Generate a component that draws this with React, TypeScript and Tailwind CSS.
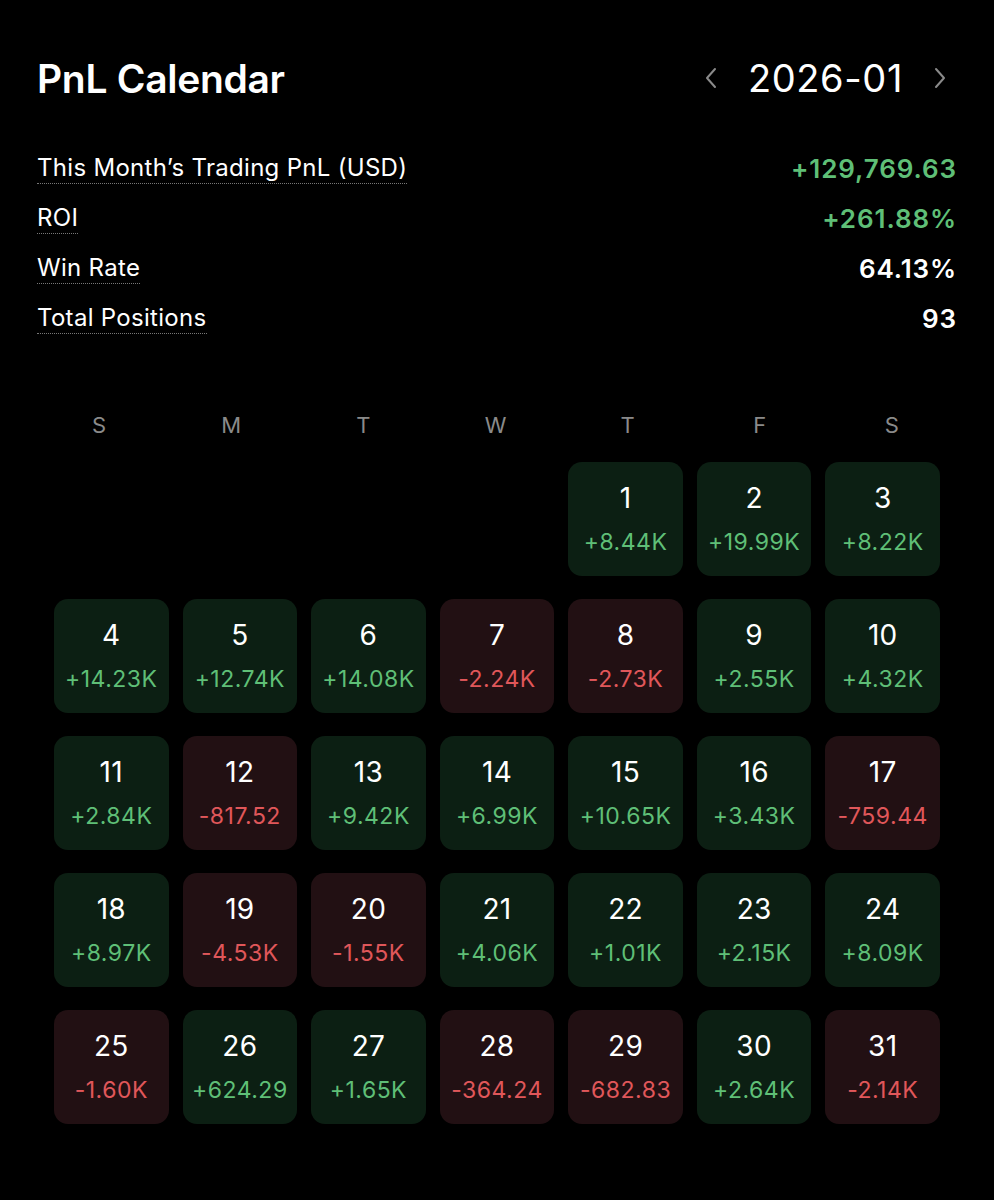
import React from "react";

type Day = { d: number; v: string; pos: boolean };

const days: Day[] = [
  { d: 1, v: "+8.44K", pos: true },
  { d: 2, v: "+19.99K", pos: true },
  { d: 3, v: "+8.22K", pos: true },
  { d: 4, v: "+14.23K", pos: true },
  { d: 5, v: "+12.74K", pos: true },
  { d: 6, v: "+14.08K", pos: true },
  { d: 7, v: "-2.24K", pos: false },
  { d: 8, v: "-2.73K", pos: false },
  { d: 9, v: "+2.55K", pos: true },
  { d: 10, v: "+4.32K", pos: true },
  { d: 11, v: "+2.84K", pos: true },
  { d: 12, v: "-817.52", pos: false },
  { d: 13, v: "+9.42K", pos: true },
  { d: 14, v: "+6.99K", pos: true },
  { d: 15, v: "+10.65K", pos: true },
  { d: 16, v: "+3.43K", pos: true },
  { d: 17, v: "-759.44", pos: false },
  { d: 18, v: "+8.97K", pos: true },
  { d: 19, v: "-4.53K", pos: false },
  { d: 20, v: "-1.55K", pos: false },
  { d: 21, v: "+4.06K", pos: true },
  { d: 22, v: "+1.01K", pos: true },
  { d: 23, v: "+2.15K", pos: true },
  { d: 24, v: "+8.09K", pos: true },
  { d: 25, v: "-1.60K", pos: false },
  { d: 26, v: "+624.29", pos: true },
  { d: 27, v: "+1.65K", pos: true },
  { d: 28, v: "-364.24", pos: false },
  { d: 29, v: "-682.83", pos: false },
  { d: 30, v: "+2.64K", pos: true },
  { d: 31, v: "-2.14K", pos: false },
];

const stats = [
  { label: "This Month’s Trading PnL (USD)", value: "+129,769.63", green: true },
  { label: "ROI", value: "+261.88%", green: true },
  { label: "Win Rate", value: "64.13%", green: false },
  { label: "Total Positions", value: "93", green: false },
];

const weekdays = ["S", "M", "T", "W", "T", "F", "S"];

function Chevron({ dir }: { dir: "left" | "right" }) {
  return (
    <svg width="14" height="22" viewBox="0 0 14 22" fill="none">
      <polyline
        points={dir === "left" ? "11,2 3,11 11,20" : "3,2 11,11 3,20"}
        stroke="#8a8a8a"
        strokeWidth="2"
        strokeLinecap="round"
        strokeLinejoin="round"
      />
    </svg>
  );
}

export default function App() {
  return (
    <div
      className="w-[994px] h-[1200px] bg-black text-white"
      style={{ fontFamily: "Inter, 'Noto Sans', sans-serif" }}
    >
      <div className="px-[37px] pt-[55px]">
        <div className="flex items-center justify-between h-[46px]">
          <div className="text-[39px] font-semibold tracking-[-0.3px] leading-none">PnL Calendar</div>
          <div className="flex items-center pr-[10px]">
            <Chevron dir="left" />
            <div className="text-[38px] leading-none mx-[30px] tracking-[0.6px]">2026-01</div>
            <Chevron dir="right" />
          </div>
        </div>

        <div className="mt-[52px] flex flex-col gap-[19px]">
          {stats.map((s) => (
            <div key={s.label} className="flex items-center justify-between h-[31px]">
              <span className="text-[24px] leading-[30px] tracking-[0.3px] border-b border-dotted border-[#777] text-white">
                {s.label}
              </span>
              <span
                className={`text-[26px] font-semibold leading-[30px] tracking-[0.9px] ${
                  s.green ? "text-[#5fbf77]" : "text-white"
                }`}
              >
                {s.value}
              </span>
            </div>
          ))}
        </div>
      </div>

      <div className="mt-[76px] px-[33px]">
        <div className="grid grid-cols-7 w-[925px]">
          {weekdays.map((w, i) => (
            <div key={i} className="text-center text-[22px] leading-[30px] text-[#8a8a8a]">
              {w}
            </div>
          ))}
        </div>
      </div>

      <div className="mt-[22px] pl-[54px]">
        <div className="grid grid-cols-7 w-[886px] gap-x-[14px] gap-y-[23px]">
          {Array.from({ length: 4 }).map((_, i) => (
            <div key={"e" + i} className="h-[114px]" />
          ))}
          {days.map((d) => (
            <div
              key={d.d}
              className={`h-[114px] rounded-[14px] flex flex-col items-center justify-center ${
                d.pos ? "bg-[#0c1f13]" : "bg-[#221013]"
              }`}
            >
              <div className="text-[28px] leading-[32px] text-white tracking-[0.3px]">{d.d}</div>
              <div
                className={`mt-[14px] text-[23px] leading-[28px] tracking-[0.5px] ${
                  d.pos ? "text-[#5fbf77]" : "text-[#e0575a]"
                }`}
              >
                {d.v}
              </div>
            </div>
          ))}
        </div>
      </div>
    </div>
  );
}
